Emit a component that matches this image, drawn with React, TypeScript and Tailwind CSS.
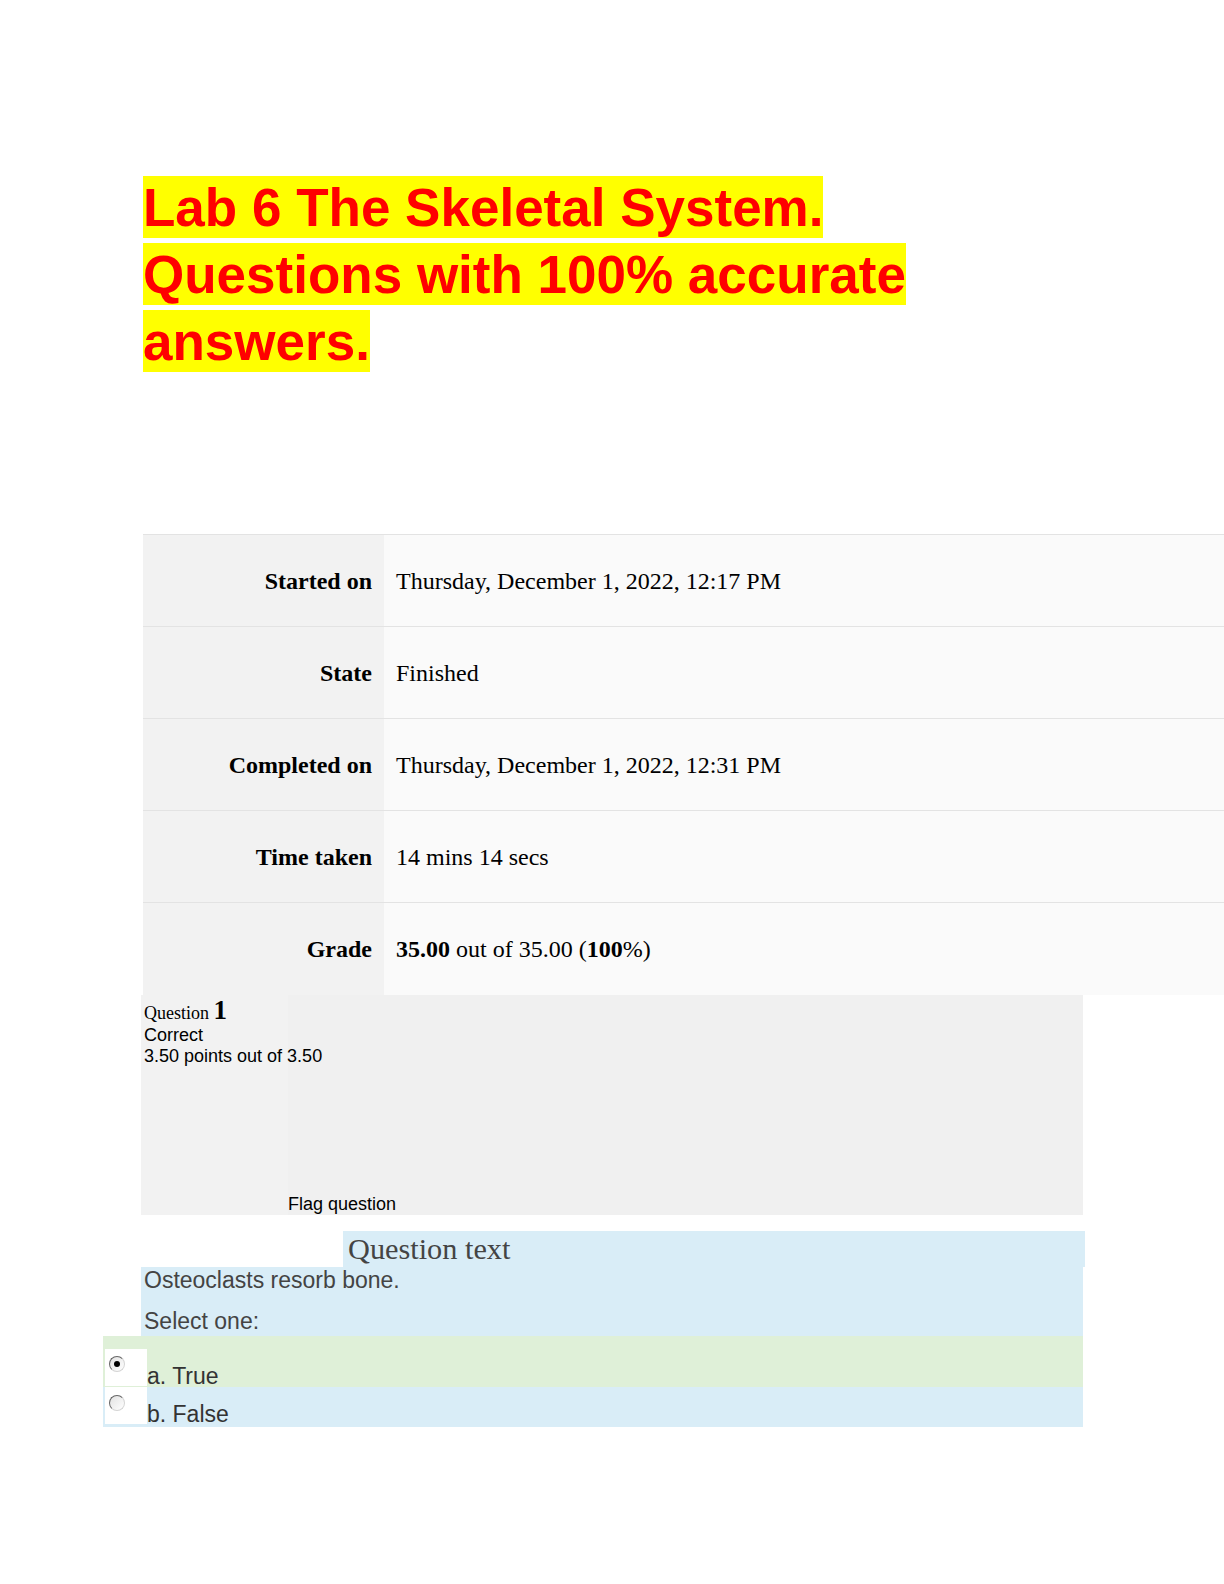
const sans = "font-['Liberation_Sans',Arial,sans-serif]";
const serif = "font-['Liberation_Serif','Times_New_Roman',serif]";

interface SummaryRow {
    label: string;
    value: React.ReactNode;
}

const rows: SummaryRow[] = [
    { label: "Started on", value: "Thursday, December 1, 2022, 12:17 PM" },
    { label: "State", value: "Finished" },
    { label: "Completed on", value: "Thursday, December 1, 2022, 12:31 PM" },
    { label: "Time taken", value: "14 mins 14 secs" },
    {
        label: "Grade",
        value: (
            <span>
                <b>35.00</b> out of 35.00 (<b>100</b>%)
            </span>
        ),
    },
];

const Radio = ({ checked }: { checked?: boolean }) => (
    <span className="flex h-[16px] w-[16px] items-center justify-center rounded-full border border-t-[#666] border-l-[#666] border-b-[#d4d4d4] border-r-[#d4d4d4] bg-gradient-to-br from-[#e2e2e2] to-white">
        {checked && <span className="h-[6px] w-[6px] rounded-full bg-black" />}
    </span>
);

const Title = () => (
    <h1 className={`${sans} pl-[143px] pr-[200px] pt-[173px] text-[53px] font-bold leading-[67px] text-[#ff0000]`}>
        <span className="bg-[#ffff00] py-[1.5px] [box-decoration-break:clone]">
            Lab 6 The Skeletal System. Questions with 100% accurate answers.
        </span>
    </h1>
);

const Summary = () => (
    <div className={`${serif} ml-[143px] mt-[160px] border-t border-[#e3e3e3] text-[24px] text-black`}>
        {rows.map((row) => (
            <div key={row.label} className="flex h-[92px] border-b border-[#e3e3e3] last:border-b-0">
                <div className="flex w-[241px] shrink-0 items-center justify-end bg-[#f2f2f2] pr-[12px] font-bold">
                    {row.label}
                </div>
                <div className="flex flex-1 items-center bg-[#fafafa] pl-[12px]">{row.value}</div>
            </div>
        ))}
    </div>
);

const QuestionInfo = () => (
    <div className="ml-[141px] flex h-[220px] w-[942px] bg-[#f0f0f0]">
        <div className="w-[147px] shrink-0 whitespace-nowrap bg-[#f2f2f2] pl-[3px] pt-[4px] text-black">
            <div className={`${serif} leading-[23px]`}>
                <span className="text-[18px]">Question </span>
                <span className="text-[27px] font-bold">1</span>
            </div>
            <div className={`${sans} text-[18px] leading-[21px]`}>Correct</div>
            <div className={`${sans} text-[18px] leading-[21px]`}>3.50 points out of 3.50</div>
        </div>
        <div className={`${sans} flex flex-1 flex-col justify-end text-[18px] leading-[21px] text-black`}>
            Flag question
        </div>
    </div>
);

const QuestionBody = () => (
    <div className="mt-[16px]">
        <div className={`${serif} ml-[343px] h-[36px] w-[742px] bg-[#d9edf7] pl-[5px] text-[30.3px] leading-[36px] text-[#444]`}>
            Question text
        </div>
        <div className={`${sans} ml-[141px] w-[942px] bg-[#d9edf7] pb-[2px] pl-[3px] pt-[1px] text-[23px] leading-[25px] text-[#444]`}>
            <p>Osteoclasts resorb bone.</p>
            <p className="mt-[16px]">Select one:</p>
        </div>
        <div className={`${sans} ml-[103px] w-[980px] text-[23px] leading-[20px] text-[#333]`}>
            <div className="flex h-[51px] items-end bg-[#dff0d8] pb-[1px]">
                <div className="ml-[2px] h-[37px] w-[42px] shrink-0 self-end bg-white pl-[4px] pt-[7px]">
                    <Radio checked />
                </div>
                <span>a. True</span>
            </div>
            <div className="flex h-[40px] items-end bg-[#d9edf7] pb-[3px]">
                <div className="ml-[2px] h-[37px] w-[42px] shrink-0 self-start bg-white pl-[4px] pt-[8px]">
                    <Radio />
                </div>
                <span>b. False</span>
            </div>
        </div>
    </div>
);

export default function App() {
    return (
        <div className="min-h-[1584px] w-full overflow-hidden bg-white">
            <Title />
            <Summary />
            <QuestionInfo />
            <QuestionBody />
        </div>
    );
}
